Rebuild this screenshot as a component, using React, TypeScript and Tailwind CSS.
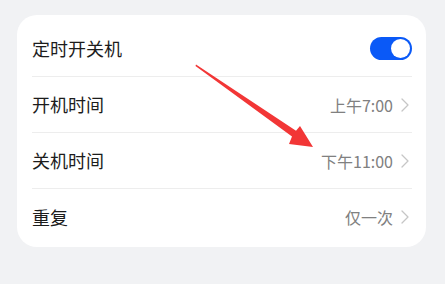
const rows = [
  { label: "开机时间", value: "上午7:00" },
  { label: "关机时间", value: "下午11:00" },
  { label: "重复", value: "仅一次" },
];

function Chevron() {
  return (
    <svg width="8" height="14" viewBox="0 0 8 14" fill="none" className="ml-[8px] mr-[3px]">
      <path d="M1 1l6 6-6 6" stroke="#c6c6c6" strokeWidth="1.3" strokeLinecap="round" strokeLinejoin="round" />
    </svg>
  );
}

export default function App() {
  return (
    <div
      className="relative w-[445px] h-[284px] bg-[#f1f2f4] pt-[15px] pl-[17px]"
      style={{ fontFamily: '"Noto Sans CJK SC", "Noto Sans", sans-serif' }}
    >
      <div className="w-[409px] bg-white rounded-[20px] pt-[6px] pb-[2px] pl-[15px] pr-[14px]">
        <div className="flex items-center justify-between h-14 border-b border-[#ededed]">
          <span className="text-[18px] text-[#1c1c1c]">定时开关机</span>
          <div className="w-[42px] h-[23px] rounded-full bg-[#0a59f7] flex items-center justify-end px-[2px]">
            <div className="w-[19px] h-[19px] rounded-full bg-white" />
          </div>
        </div>
        {rows.map((r, i) => (
          <div
            key={r.label}
            className={
              i < rows.length - 1
                ? "flex items-center justify-between h-14 border-b border-[#ededed]"
                : "flex items-center justify-between h-14"
            }
          >
            <span className="text-[18px] text-[#1c1c1c]">{r.label}</span>
            <div className="flex items-center">
              <span className="text-[16px] text-[#808080]">{r.value}</span>
              <Chevron />
            </div>
          </div>
        ))}
      </div>

      {/* red annotation arrow */}
      <svg className="absolute left-0 top-0 pointer-events-none" width="445" height="284">
        <polygon
          points="196,64.5 296,130.8 300,126 313,147 289,144 292,136.4 195.5,66"
          fill="#f23636"
        />
      </svg>
    </div>
  );
}
